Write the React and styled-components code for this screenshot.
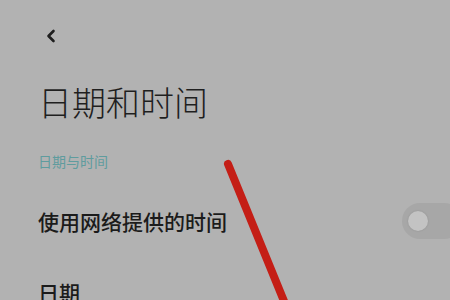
import React from "react";
import styled, { createGlobalStyle } from "styled-components";

const Global = createGlobalStyle`
  html, body { margin: 0; padding: 0; background: #b2b2b2; }
  body { font-family: "Noto Sans CJK SC", "Noto Sans", sans-serif; }
`;

const Screen = styled.div`
  position: relative;
  width: 450px;
  height: 300px;
  overflow: hidden;
  background: #b2b2b2;
  box-sizing: border-box;
  padding: 0 0 0 38px;
  display: flex;
  flex-direction: column;
  & > * { flex-shrink: 0; }
`;

const TopBar = styled.div`
  height: 28px;
  margin-top: 22px;
  display: flex;
  align-items: center;
  padding-left: 7px;
`;

const Title = styled.h1`
  margin: 32px 0 0 0;
  font-size: 34px;
  line-height: 40px;
  font-weight: 300;
  color: #1f1f1f;
  letter-spacing: 0;
`;

const Section = styled.div`
  margin-top: 30px;
  font-size: 14px;
  line-height: 18px;
  color: #5f9c9e;
`;

const Row = styled.div`
  display: flex;
  align-items: center;
  justify-content: space-between;
  height: ${(p) => p.h}px;
  margin-top: ${(p) => p.mt}px;
`;

const RowLabel = styled.div`
  font-size: 21px;
  line-height: 28px;
  font-weight: 500;
  color: #1b1b1b;
`;

const Toggle = styled.div`
  width: 60px;
  height: 36px;
  margin-right: -12px;
  border-radius: 18px;
  background: #a7a7a7;
  display: flex;
  align-items: center;
  padding-left: 6px;
  box-sizing: border-box;
`;

const Knob = styled.div`
  width: 20px;
  height: 20px;
  border-radius: 50%;
  background: #c3c3c3;
  box-shadow: 0 0 2px rgba(0, 0, 0, 0.15);
`;

const Annotation = styled.svg`
  position: absolute;
  left: 0;
  top: 0;
  pointer-events: none;
`;

export default function App() {
  return (
    <>
      <Global />
      <Screen>
        <TopBar>
          <svg width="12" height="14" viewBox="0 0 12 14">
            <path d="M8.5 2 L3.5 7 L8.5 12" fill="none" stroke="#1e1e1e" strokeWidth="2.6" strokeLinecap="round" strokeLinejoin="round" />
          </svg>
        </TopBar>
        <Title>日期和时间</Title>
        <Section>日期与时间</Section>
        <Row h={40} mt={31}>
          <RowLabel>使用网络提供的时间</RowLabel>
          <Toggle>
            <Knob />
          </Toggle>
        </Row>
        <Row h={40} mt={31}>
          <RowLabel>日期</RowLabel>
        </Row>
        <Annotation width="450" height="300" viewBox="0 0 450 300">
          <line x1="228" y1="164" x2="286" y2="306" stroke="#c41e16" strokeWidth="8" strokeLinecap="round" />
        </Annotation>
      </Screen>
    </>
  );
}
